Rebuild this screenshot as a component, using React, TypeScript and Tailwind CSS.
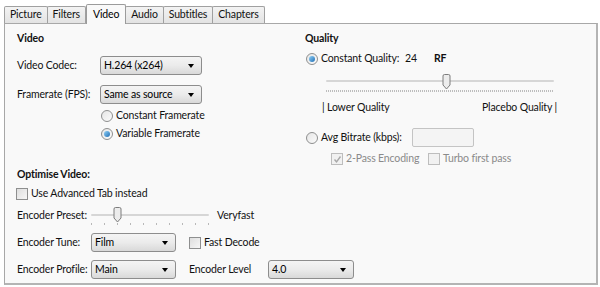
import React from 'react';

const font = { fontFamily: 'Lato, "Open Sans", sans-serif' };

const Tab = ({ label, active }: { label: string; active?: boolean }) =>
  active ? (
    <div className="relative z-10 -mb-px flex h-[20px] items-center self-end rounded-t-[2px] border border-b-0 border-[#9b9b9b] bg-[#f9f9f9] px-[6px] text-black">
      {label}
    </div>
  ) : (
    <div className="-ml-px flex h-[17px] items-center self-end rounded-t-[2px] border border-b-0 border-[#a0a0a0] bg-gradient-to-b from-[#f3f3f3] to-[#e3e3e3] px-[5px] text-[#111]">
      {label}
    </div>
  );

const Select = ({ value, w }: { value: string; w: string }) => (
  <div
    className={`flex h-[19px] shrink-0 ${w} items-center justify-between rounded-[3px] border border-[#8d8d8d] bg-gradient-to-b from-[#f4f4f4] via-[#ebebeb] to-[#d9d9d9] pl-[3px] pr-[7px] text-black`}
  >
    <span>{value}</span>
    <span className="h-0 w-0 border-x-[3.5px] border-t-[4px] border-x-transparent border-t-black" />
  </div>
);

const Radio = ({ checked }: { checked?: boolean }) => (
  <span className="flex h-[12px] w-[12px] shrink-0 items-center justify-center rounded-full border border-[#8e8f8f] bg-gradient-to-br from-[#e6e6e6] to-[#fbfbfb]">
    {checked && <span className="h-[6px] w-[6px] rounded-full bg-gradient-to-br from-[#8fd0f6] to-[#1d6fb4]" />}
  </span>
);

const Check = ({ checked, disabled }: { checked?: boolean; disabled?: boolean }) => (
  <span
    className={`flex h-[12px] w-[12px] shrink-0 items-center justify-center border ${
      disabled ? 'border-[#bdbdbd] bg-[#f1f1f1]' : 'border-[#8e8f8f] bg-gradient-to-br from-[#dedede] to-[#f7f7f7]'
    }`}
  >
    {checked && (
      <svg width="9" height="9" viewBox="0 0 9 9">
        <path d="M1.5 4.5 L3.5 6.8 L7.5 1.5" fill="none" stroke="#a8a8a8" strokeWidth="1.4" />
      </svg>
    )}
  </span>
);

const Thumb = () => (
  <svg width="9" height="16" viewBox="0 0 9 16" className="absolute top-0">
    <path d="M1 2 Q1 0.5 2.5 0.5 H6.5 Q8 0.5 8 2 V11 L4.5 15 L1 11 Z" fill="#ececec" stroke="#7c7c7c" strokeWidth="1" />
  </svg>
);

const App = () => {
  return (
    <div className="h-[287px] w-[600px] whitespace-nowrap bg-white text-[10.5px] tracking-[-0.15px] text-[#111]" style={font}>
      <div className="flex h-[23px] items-end pl-[5px]">
        <Tab label="Picture" />
        <Tab label="Filters" />
        <Tab label="Video" active />
        <Tab label="Audio" />
        <Tab label="Subtitles" />
        <Tab label="Chapters" />
      </div>
      <div className="ml-[4px] flex h-[262px] w-[594px] border border-[#a8a8a8] border-r-2 border-b-2 border-r-[#b4b4b4] border-b-[#b4b4b4] bg-[#f9f9f9] pt-[7px]">
        {/* left column */}
        <div className="flex w-[300px] shrink-0 flex-col pl-[12px]">
          <div className="flex h-4 items-center font-bold">Video</div>
          <div className="mt-[9px] flex h-[19px] items-center">
            <span className="w-[83px] shrink-0">Video Codec:</span>
            <Select value="H.264 (x264)" w="w-[102px]" />
          </div>
          <div className="mt-[10px] flex h-[19px] items-center">
            <span className="w-[83px] shrink-0">Framerate (FPS):</span>
            <Select value="Same as source" w="w-[102px]" />
          </div>
          <div className="ml-[84px] mt-[4px] flex h-4 items-center gap-[3px]">
            <Radio />
            <span>Constant Framerate</span>
          </div>
          <div className="ml-[84px] mt-[2px] flex h-4 items-center gap-[3px]">
            <Radio checked />
            <span>Variable Framerate</span>
          </div>
          <div className="mt-[25px] flex h-4 items-center font-bold">Optimise Video:</div>
          <div className="ml-[-1px] mt-[3px] flex h-4 items-center gap-[3px]">
            <Check />
            <span>Use Advanced Tab instead</span>
          </div>
          <div className="mt-[5px] flex h-[18px] items-center">
            <span className="w-[74px] shrink-0">Encoder Preset:</span>
            <div className="relative h-[18px] w-[118px] shrink-0">
              <div className="absolute left-0 right-0 top-[7px] h-[2px] rounded bg-[#d6d6d6]" />
              <div className="absolute left-0 right-0 top-[16px] flex justify-between">
                {Array.from({ length: 10 }).map((_, i) => (
                  <span key={i} className="h-[2px] w-px bg-[#b8b8b8]" />
                ))}
              </div>
              <div className="absolute left-[22px] top-0">
                <Thumb />
              </div>
            </div>
            <span className="ml-[8px]">Veryfast</span>
          </div>
          <div className="mt-[8px] flex h-[19px] items-center">
            <span className="w-[74px] shrink-0">Encoder Tune:</span>
            <Select value="Film" w="w-[85px]" />
            <span className="ml-[13px] flex items-center gap-[3px]">
              <Check />
              <span>Fast Decode</span>
            </span>
          </div>
          <div className="mt-[8px] flex h-[19px] items-center">
            <span className="w-[74px] shrink-0">Encoder Profile:</span>
            <Select value="Main" w="w-[85px]" />
            <span className="ml-[13px] w-[79px] shrink-0">Encoder Level</span>
            <Select value="4.0" w="w-[86px]" />
          </div>
        </div>
        {/* right column */}
        <div className="flex w-[280px] shrink-0 flex-col">
          <div className="flex h-4 items-center font-bold">Quality</div>
          <div className="ml-px mt-[4px] flex h-4 items-center">
            <Radio checked />
            <span className="ml-[3px] w-[84px] shrink-0">Constant Quality:</span>
            <span className="w-[29px] shrink-0">24</span>
            <span className="font-bold">RF</span>
          </div>
          <div className="relative ml-[21px] mt-[6px] h-[20px] w-[228px]">
            <div className="absolute left-0 right-0 top-[7px] h-[2px] rounded bg-[#d6d6d6]" />
            <div className="absolute left-0 right-0 top-[17px] h-[2px] bg-[repeating-linear-gradient(90deg,#bdbdbd_0_1px,transparent_1px_2px)]" />
            <div className="absolute left-[116px] top-[1px]">
              <Thumb />
            </div>
          </div>
          <div className="ml-[17px] mt-[7px] flex h-4 w-[235px] items-center justify-between">
            <span>| Lower Quality</span>
            <span>Placebo Quality |</span>
          </div>
          <div className="ml-px mt-[12px] flex h-[19px] items-center">
            <Radio />
            <span className="ml-[3px] w-[91px] shrink-0">Avg Bitrate (kbps):</span>
            <span className="h-[19px] w-[62px] shrink-0 rounded-[2px] border border-[#c4c4c4] bg-[#f4f4f4]" />
          </div>
          <div className="ml-[26px] mt-[4px] flex h-4 items-center">
            <Check checked disabled />
            <span className="ml-[3px] w-[82px] shrink-0 text-[#8a8a8a]">2-Pass Encoding</span>
            <Check disabled />
            <span className="ml-[3px] text-[#8a8a8a]">Turbo first pass</span>
          </div>
        </div>
      </div>
    </div>
  );
};

export default App;
